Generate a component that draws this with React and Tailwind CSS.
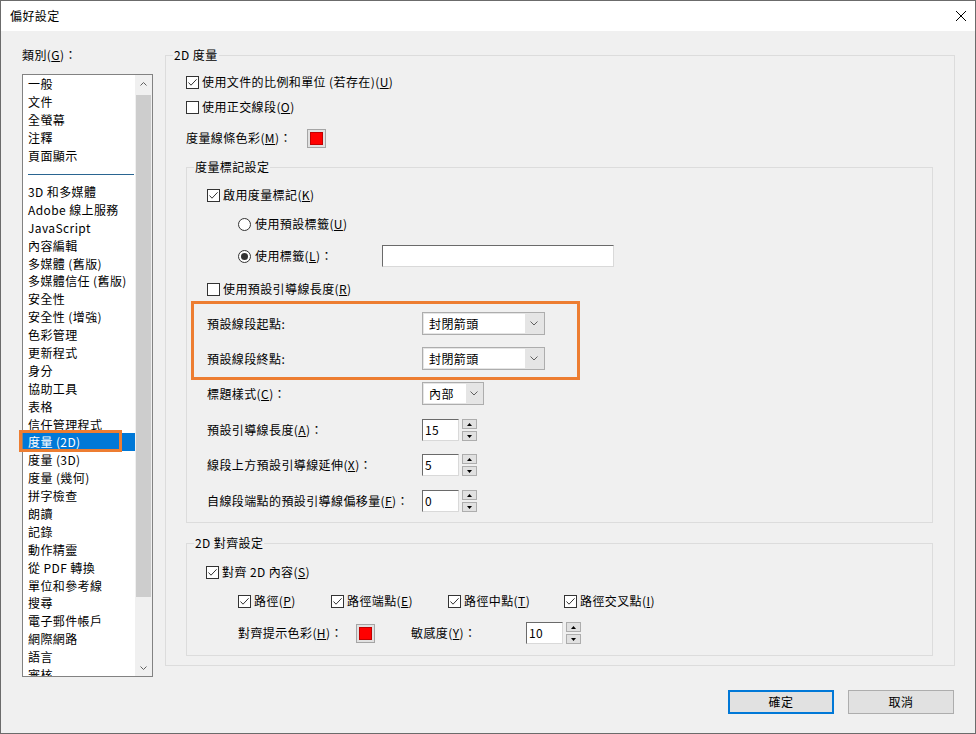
import React from 'react';

const general = ['一般', '文件', '全螢幕', '注釋', '頁面顯示'];
const categories = [
  '3D 和多媒體', 'Adobe 線上服務', 'JavaScript', '內容編輯', '多媒體 (舊版)', '多媒體信任 (舊版)',
  '安全性', '安全性 (增強)', '色彩管理', '更新程式', '身分', '協助工具', '表格', '信任管理程式',
  '度量 (2D)', '度量 (3D)', '度量 (幾何)', '拼字檢查', '朗讀', '記錄', '動作精靈', '從 PDF 轉換',
  '單位和參考線', '搜尋', '電子郵件帳戶', '網際網路', '語言', '審核',
];

function Check({ checked }) {
  return (
    <span className="w-[13px] h-[13px] border border-[#333333] bg-white flex items-center justify-center shrink-0">
      {checked && (
        <svg width="11" height="11" viewBox="0 0 11 11">
          <path d="M1.5 5.5 L4 8.2 L9.6 2.3" fill="none" stroke="#333333" strokeWidth="1" />
        </svg>
      )}
    </span>
  );
}

function Radio({ checked }) {
  return (
    <span className="w-[13px] h-[13px] rounded-full border border-[#333333] bg-white flex items-center justify-center shrink-0">
      {checked && <span className="w-[7px] h-[7px] rounded-full bg-[#333333]" />}
    </span>
  );
}

function Chevron() {
  return (
    <svg width="8" height="5" viewBox="0 0 8 5">
      <path d="M0.5 0.5 L4 4 L7.5 0.5" fill="none" stroke="#606060" strokeWidth="1" />
    </svg>
  );
}

function Swatch() {
  return (
    <div className="w-[19px] h-[19px] border border-[#a5a5a5] bg-[#e1e1e1] p-[2px] flex shrink-0">
      <div className="flex-1 bg-[#ff0000] border border-[#c00000]" />
    </div>
  );
}

function Spin({ value }) {
  return (
    <div className="flex items-stretch h-[22px]">
      <div className="w-[37px] bg-white border-t border-l border-[#6a6a6a] border-r border-b border-r-[#d9d9d9] border-b-[#d9d9d9] pl-[2px] flex items-center">
        {value}
      </div>
      <div className="ml-[3px] w-[15px] flex flex-col justify-between">
        <div className="h-[10px] border border-[#adadad] bg-[#e1e1e1] flex items-center justify-center">
          <svg width="5" height="3" viewBox="0 0 5 3"><path d="M2.5 0 L5 3 L0 3 Z" fill="#000" /></svg>
        </div>
        <div className="h-[10px] border border-[#adadad] bg-[#e1e1e1] flex items-center justify-center">
          <svg width="5" height="3" viewBox="0 0 5 3"><path d="M0 0 L5 0 L2.5 3 Z" fill="#000" /></svg>
        </div>
      </div>
    </div>
  );
}

function CheckRow({ checked, children, className }) {
  return (
    <div className={className}>
      <Check checked={checked} />
      <span className="ml-[3px]">{children}</span>
    </div>
  );
}

export default function App() {
  return (
    <div className="w-[976px] h-[734px] bg-[#f0f0f0] border border-[#6b6b6b] flex flex-col overflow-hidden text-[12px] leading-[16px] tracking-[0.4px] text-black font-['Noto_Sans_CJK_TC','Noto_Sans',sans-serif] whitespace-nowrap">

      {/* title bar */}
      <div className="h-[30px] shrink-0 bg-white flex items-center justify-between pl-[9px] pr-[9px]">
        <span>偏好設定</span>
        <svg width="10" height="10" viewBox="0 0 10 10">
          <path d="M0 0 L10 10 M10 0 L0 10" stroke="#000" strokeWidth="1" />
        </svg>
      </div>

      <div className="flex items-start">

        {/* categories */}
        <div className="pl-[21px] pt-[16px]">
          <div>類別(<u>G</u>)：</div>
          <div className="mt-[11px] w-[131px] h-[603px] border border-[#828282] bg-white flex">
            <div className="w-[112px] relative overflow-y-clip overflow-x-visible">
              {general.map((t) => (
                <div key={t} className="h-[18px] leading-[18px] pl-[5px]">{t}</div>
              ))}
              <div className="h-[18px] flex items-center pl-[5px]">
                <div className="w-[106px] h-px bg-[#2a6591]" />
              </div>
              {categories.map((t) =>
                t === '度量 (2D)' ? (
                  <div key={t} className="relative h-[17.9px] leading-[17.9px] pl-[5px] bg-[#0078d7] text-white">
                    {t}
                    <div className="absolute -left-[4px] -top-[3px] w-[103px] h-[22px] border-[3px] border-[#ed7d31]" />
                  </div>
                ) : (
                  <div key={t} className="h-[17.9px] leading-[17.9px] pl-[5px]">{t}</div>
                )
              )}
            </div>
            <div className="w-[17px] bg-[#f0f0f0] flex flex-col items-center">
              <div className="h-[17px] flex items-center justify-center">
                <svg width="7" height="4" viewBox="0 0 7 4">
                  <path d="M0.5 3.5 L3.5 0.5 L6.5 3.5" fill="none" stroke="#606060" strokeWidth="1" />
                </svg>
              </div>
              <div className="mt-[3px] w-[15px] h-[502px] bg-[#cdcdcd]" />
              <div className="flex-1" />
              <div className="h-[17px] flex items-center justify-center">
                <svg width="7" height="4" viewBox="0 0 7 4">
                  <path d="M0.5 0.5 L3.5 3.5 L6.5 0.5" fill="none" stroke="#606060" strokeWidth="1" />
                </svg>
              </div>
            </div>
          </div>
        </div>

        {/* 2D 度量 */}
        <div className="ml-[12px] mt-[24px] w-[790px] border border-[#dcdcdc] pl-[20px] pr-[21px] pb-[9px]">
          <div className="-mt-[9px] -ml-[13px] w-fit px-[1px] bg-[#f0f0f0]">2D 度量</div>

          <CheckRow checked className="mt-[7px] h-[24px] flex items-center">
            使用文件的比例和單位 (若存在)(<u>U</u>)
          </CheckRow>
          <CheckRow className="mt-[1px] h-[24px] flex items-center">
            使用正交線段(<u>O</u>)
          </CheckRow>
          <div className="mt-[8px] h-[22px] flex items-center">
            <span className="w-[121px]">度量線條色彩(<u>M</u>)：</span>
            <Swatch />
          </div>

          {/* 度量標記設定 */}
          <div className="mt-[18px] border border-[#dcdcdc] pl-[20px] pb-[10px]">
            <div className="-mt-[9px] -ml-[13px] w-fit px-[1px] bg-[#f0f0f0]">度量標記設定</div>

            <CheckRow checked className="mt-[8px] h-[24px] flex items-center">
              啟用度量標記(<u>K</u>)
            </CheckRow>
            <div className="mt-[5px] h-[24px] flex items-center ml-[31px]">
              <Radio />
              <span className="ml-[4px]">使用預設標籤(<u>U</u>)</span>
            </div>
            <div className="mt-[8px] h-[24px] flex items-center ml-[31px]">
              <Radio checked />
              <span className="ml-[4px] w-[127px]">使用標籤(<u>L</u>)：</span>
              <div className="w-[232px] h-[22px] bg-white border-t border-l border-[#6a6a6a] border-r border-b border-r-[#d9d9d9] border-b-[#d9d9d9]" />
            </div>
            <CheckRow className="mt-[9px] h-[24px] flex items-center">
              使用預設引導線長度(<u>R</u>)
            </CheckRow>

            <div className="-ml-[16px] w-[389px] border-[3px] border-[#ed7d31] pl-[13px] pt-[8px] pb-[7px]">
              <div className="h-[23px] flex items-center">
                <span className="w-[215px]">預設線段起點:</span>
                <div className="w-[123px] h-[23px] border border-[#adadad] bg-[#e5e5e5] p-[1px] flex">
                  <div className="w-[101px] bg-white pl-[5px] flex items-center">封閉箭頭</div>
                  <div className="flex-1 flex items-center justify-center"><Chevron /></div>
                </div>
              </div>
              <div className="mt-[12px] h-[23px] flex items-center">
                <span className="w-[215px]">預設線段終點:</span>
                <div className="w-[123px] h-[23px] border border-[#adadad] bg-[#e5e5e5] p-[1px] flex">
                  <div className="w-[101px] bg-white pl-[5px] flex items-center">封閉箭頭</div>
                  <div className="flex-1 flex items-center justify-center"><Chevron /></div>
                </div>
              </div>
            </div>

            <div className="mt-[2px] h-[23px] flex items-center">
              <span className="w-[215px]">標題樣式(<u>C</u>)：</span>
              <div className="w-[62px] h-[23px] border border-[#adadad] bg-[#e5e5e5] p-[1px] flex">
                <div className="w-[42px] bg-white pl-[5px] flex items-center">內部</div>
                <div className="flex-1 flex items-center justify-center"><Chevron /></div>
              </div>
            </div>
            <div className="mt-[14px] flex items-center">
              <span className="w-[215px]">預設引導線長度(<u>A</u>)：</span>
              <Spin value="15" />
            </div>
            <div className="mt-[13px] flex items-center">
              <span className="w-[215px]">線段上方預設引導線延伸(<u>X</u>)：</span>
              <Spin value="5" />
            </div>
            <div className="mt-[14px] flex items-center">
              <span className="w-[215px]">自線段端點的預設引導線偏移量(<u>F</u>)：</span>
              <Spin value="0" />
            </div>
          </div>

          {/* 2D 對齊設定 */}
          <div className="mt-[20px] border border-[#dcdcdc] pl-[19px] pb-[11px]">
            <div className="-mt-[9px] -ml-[12px] w-fit px-[1px] bg-[#f0f0f0]">2D 對齊設定</div>

            <CheckRow checked className="mt-[9px] h-[24px] flex items-center">
              對齊 2D 內容(<u>S</u>)
            </CheckRow>
            <div className="mt-[5px] h-[24px] flex items-center ml-[32px]">
              <CheckRow checked className="w-[93px] flex items-center">路徑(<u>P</u>)</CheckRow>
              <CheckRow checked className="w-[117px] flex items-center">路徑端點(<u>E</u>)</CheckRow>
              <CheckRow checked className="w-[116px] flex items-center">路徑中點(<u>T</u>)</CheckRow>
              <CheckRow checked className="flex items-center">路徑交叉點(<u>I</u>)</CheckRow>
            </div>
            <div className="mt-[9px] h-[22px] flex items-center ml-[32px]">
              <span className="w-[118px]">對齊提示色彩(<u>H</u>)：</span>
              <Swatch />
              <span className="ml-[36px] w-[115px]">敏感度(<u>Y</u>)：</span>
              <Spin value="10" />
            </div>
          </div>
        </div>
      </div>

      {/* buttons */}
      <div className="mt-[13px] flex justify-end gap-[14px] pr-[21px]">
        <button className="w-[106px] h-[24px] border-2 border-[#0078d7] bg-[#e1e1e1]">確定</button>
        <button className="w-[106px] h-[24px] border border-[#adadad] bg-[#e1e1e1]">取消</button>
      </div>
    </div>
  );
}
